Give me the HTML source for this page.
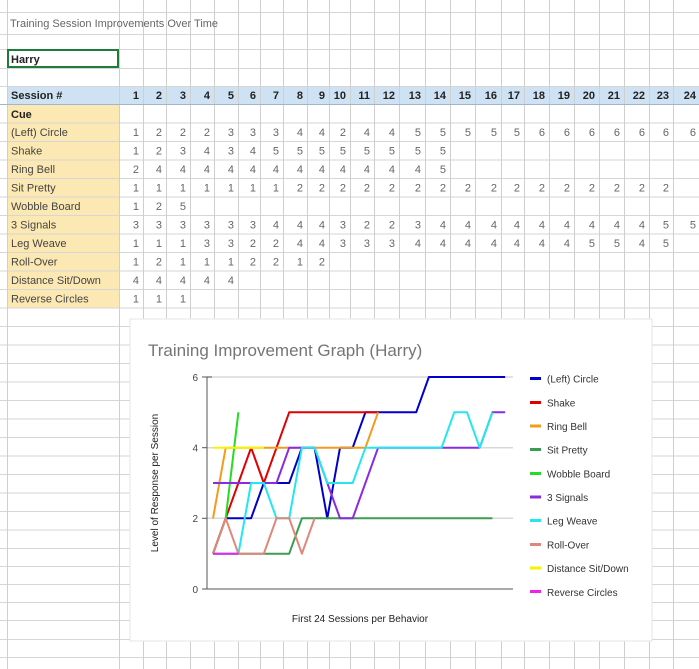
<!DOCTYPE html>
<html><head><meta charset="utf-8"><style>
html,body{margin:0;padding:0;background:#fff;width:699px;height:669px;overflow:hidden}
svg{display:block;font-family:"Liberation Sans",Arial,sans-serif}
</style></head><body>
<svg width="699" height="669" viewBox="0 0 699 669" xmlns="http://www.w3.org/2000/svg">
<!-- fills -->
<rect x="7" y="86" width="693" height="18" fill="#cfe2f3"/>
<rect x="7" y="104" width="113" height="204" fill="#fce8b2"/>
<!-- horizontal grid -->
<g stroke="#d6d6d6" stroke-width="1">
<line x1="0" x2="699" y1="12.5" y2="12.5"/><line x1="0" x2="699" y1="34.5" y2="34.5"/>
<line x1="0" x2="699" y1="49.5" y2="49.5"/><line x1="0" x2="699" y1="68.5" y2="68.5"/>
<line x1="0" x2="699" y1="86.5" y2="86.5"/><line x1="0" x2="699" y1="104.5" y2="104.5"/>
<line x1="0" x2="699" y1="123" y2="123"/><line x1="0" x2="699" y1="141.5" y2="141.5"/>
<line x1="0" x2="699" y1="160" y2="160"/><line x1="0" x2="699" y1="178.5" y2="178.5"/>
<line x1="0" x2="699" y1="197" y2="197"/><line x1="0" x2="699" y1="215.5" y2="215.5"/>
<line x1="0" x2="699" y1="234" y2="234"/><line x1="0" x2="699" y1="252.5" y2="252.5"/>
<line x1="0" x2="699" y1="271" y2="271"/><line x1="0" x2="699" y1="289.5" y2="289.5"/>
<line x1="0" x2="699" y1="308" y2="308"/><line x1="0" x2="699" y1="326.5" y2="326.5"/>
<line x1="0" x2="699" y1="345" y2="345"/><line x1="0" x2="699" y1="363.5" y2="363.5"/>
<line x1="0" x2="699" y1="382" y2="382"/><line x1="0" x2="699" y1="400.5" y2="400.5"/>
<line x1="0" x2="699" y1="419" y2="419"/><line x1="0" x2="699" y1="437.5" y2="437.5"/>
<line x1="0" x2="699" y1="456" y2="456"/><line x1="0" x2="699" y1="474.5" y2="474.5"/>
<line x1="0" x2="699" y1="493" y2="493"/><line x1="0" x2="699" y1="511.5" y2="511.5"/>
<line x1="0" x2="699" y1="530" y2="530"/><line x1="0" x2="699" y1="548.5" y2="548.5"/>
<line x1="0" x2="699" y1="566.5" y2="566.5"/><line x1="0" x2="699" y1="584.5" y2="584.5"/>
<line x1="0" x2="699" y1="602.5" y2="602.5"/><line x1="0" x2="699" y1="620.5" y2="620.5"/>
<line x1="0" x2="699" y1="639.5" y2="639.5"/><line x1="0" x2="699" y1="657.5" y2="657.5"/>
</g>
<g stroke="#cfcfcf" stroke-width="1">
<line x1="7.5" x2="7.5" y1="0" y2="669"/><line x1="119.5" x2="119.5" y1="0" y2="669"/>
<line x1="143.5" x2="143.5" y1="0" y2="669"/><line x1="166.5" x2="166.5" y1="0" y2="669"/>
<line x1="190.5" x2="190.5" y1="0" y2="669"/><line x1="214.5" x2="214.5" y1="0" y2="669"/>
<line x1="238.5" x2="238.5" y1="0" y2="669"/><line x1="260.5" x2="260.5" y1="0" y2="669"/>
<line x1="283.5" x2="283.5" y1="0" y2="669"/><line x1="307.5" x2="307.5" y1="0" y2="669"/>
<line x1="329.5" x2="329.5" y1="0" y2="669"/><line x1="350.5" x2="350.5" y1="0" y2="669"/>
<line x1="374.5" x2="374.5" y1="0" y2="669"/><line x1="399.5" x2="399.5" y1="0" y2="669"/>
<line x1="425.5" x2="425.5" y1="0" y2="669"/><line x1="450.5" x2="450.5" y1="0" y2="669"/>
<line x1="475.5" x2="475.5" y1="0" y2="669"/><line x1="501.5" x2="501.5" y1="0" y2="669"/>
<line x1="524.5" x2="524.5" y1="0" y2="669"/><line x1="549.5" x2="549.5" y1="0" y2="669"/>
<line x1="574.5" x2="574.5" y1="0" y2="669"/><line x1="599.5" x2="599.5" y1="0" y2="669"/>
<line x1="624.5" x2="624.5" y1="0" y2="669"/><line x1="649.5" x2="649.5" y1="0" y2="669"/>
<line x1="673.5" x2="673.5" y1="0" y2="669"/>
</g>
<line x1="0" x2="699" y1="104.5" y2="104.5" stroke="#9fb6cc"/>
<!-- header texts -->
<text x="10" y="27" font-size="11" fill="#666">Training Session Improvements Over Time</text>
<rect x="8" y="50" width="110" height="17" fill="#fff" stroke="#1e7b3a" stroke-width="2"/>
<text x="11" y="63" font-size="11" font-weight="bold" fill="#222">Harry</text>
<g font-size="11" font-weight="bold" fill="#222" text-anchor="end">
<text x="66" y="99" text-anchor="start" transform="translate(-55 0)">Session #</text>
<text x="139" y="99">1</text><text x="162" y="99">2</text><text x="186" y="99">3</text><text x="210" y="99">4</text>
<text x="234" y="99">5</text><text x="256" y="99">6</text><text x="279" y="99">7</text><text x="303" y="99">8</text>
<text x="325" y="99">9</text><text x="346" y="99">10</text><text x="370" y="99">11</text><text x="395" y="99">12</text>
<text x="421" y="99">13</text><text x="446" y="99">14</text><text x="471" y="99">15</text><text x="497" y="99">16</text>
<text x="520" y="99">17</text><text x="545" y="99">18</text><text x="570" y="99">19</text><text x="595" y="99">20</text>
<text x="620" y="99">21</text><text x="645" y="99">22</text><text x="669" y="99">23</text><text x="696" y="99">24</text>
<text x="11" y="118" text-anchor="start">Cue</text>
</g>
<g font-size="11" fill="#444">
<text x="11" y="136">(Left) Circle</text><text x="11" y="154.5">Shake</text><text x="11" y="173">Ring Bell</text>
<text x="11" y="191.5">Sit Pretty</text><text x="11" y="210">Wobble Board</text><text x="11" y="228.5">3 Signals</text>
<text x="11" y="247">Leg Weave</text><text x="11" y="265.5">Roll-Over</text><text x="11" y="284">Distance Sit/Down</text>
<text x="11" y="302.5">Reverse Circles</text>
</g>
<g font-size="11" fill="#666" text-anchor="end">
<text x="139 162 186 210 234 256 279 303 325 346 370 395 421 446 471 497 520 545 570 595 620 645 669 696" y="136">122233344244555556666666</text>
<text x="139 162 186 210 234 256 279 303 325 346 370 395 421 446" y="154.5">12343455555555</text>
<text x="139 162 186 210 234 256 279 303 325 346 370 395 421 446" y="173">24444444444445</text>
<text x="139 162 186 210 234 256 279 303 325 346 370 395 421 446 471 497 520 545 570 595 620 645 669" y="191.5">11111112222222222222222</text>
<text x="139 162 186" y="210">125</text>
<text x="139 162 186 210 234 256 279 303 325 346 370 395 421 446 471 497 520 545 570 595 620 645 669 696" y="228.5">333333444322344444444455</text>
<text x="139 162 186 210 234 256 279 303 325 346 370 395 421 446 471 497 520 545 570 595 620 645 669" y="247">11133224433344444445545</text>
<text x="139 162 186 210 234 256 279 303 325" y="265.5">121112212</text>
<text x="139 162 186 210 234" y="284">44444</text>
<text x="139 162 186" y="302.5">111</text>
</g>
<!-- chart -->
<rect x="130" y="319" width="522" height="322" fill="#fff" stroke="#e6e6e6"/>
<text x="148" y="356" font-size="17" fill="#757575">Training Improvement Graph (Harry)</text>
<g stroke="#d8d8d8" stroke-width="1.5">
<line x1="207" x2="513" y1="377" y2="377"/><line x1="207" x2="513" y1="447.7" y2="447.7"/><line x1="207" x2="513" y1="518.3" y2="518.3"/>
</g>
<line x1="207" x2="513" y1="589" y2="589" stroke="#555"/>
<line x1="207" x2="207" y1="377" y2="589" stroke="#555"/>
<g stroke="#555"><line x1="202" x2="212" y1="377" y2="377"/><line x1="202" x2="207" y1="447.7" y2="447.7"/><line x1="202" x2="207" y1="518.3" y2="518.3"/><line x1="202" x2="212" y1="589" y2="589"/></g>
<g font-size="10" fill="#444" text-anchor="end">
<text x="198" y="381">6</text><text x="198" y="451.5">4</text><text x="198" y="522">2</text><text x="198" y="593">0</text>
</g>
<text transform="translate(158 483) rotate(-90)" font-size="10" fill="#222" text-anchor="middle">Level of Response per Session</text>
<text x="360" y="622" font-size="10" fill="#222" text-anchor="middle">First 24 Sessions per Behavior</text>
<g fill="none" stroke-width="2" stroke-linejoin="round">
<polyline stroke="#0000cc" points="213,553.7 225.7,518.3 238.4,518.3 251.1,518.3 263.8,483 276.5,483 289.2,483 301.9,447.7 314.6,447.7 327.3,518.3 340,447.7 352.7,447.7 365.4,412.3 378.1,412.3 390.8,412.3 403.5,412.3 416.2,412.3 428.9,377 505.1,377"/>
<polyline stroke="#e00000" points="213,553.7 225.7,518.3 238.4,483 251.1,447.7 263.8,483 276.5,447.7 289.2,412.3 378.1,412.3"/>
<polyline stroke="#f59a1b" points="213,518.3 225.7,447.7 365.4,447.7 378.1,412.3"/>
<polyline stroke="#3a9d4f" points="213,553.7 289.2,553.7 301.9,518.3 492.4,518.3"/>
<polyline stroke="#22dd22" points="213,553.7 225.7,518.3 238.4,412.3"/>
<polyline stroke="#8a2be2" points="213,483 276.5,483 289.2,447.7 314.6,447.7 327.3,483 340,518.3 352.7,518.3 365.4,483 378.1,447.7 479.7,447.7 492.4,412.3 505.1,412.3"/>
<polyline stroke="#22e6f0" points="213,553.7 238.4,553.7 251.1,483 263.8,483 276.5,518.3 289.2,518.3 301.9,447.7 314.6,447.7 327.3,483 352.7,483 365.4,447.7 441.6,447.7 454.3,412.3 467,412.3 479.7,447.7 492.4,412.3"/>
<polyline stroke="#e0867a" points="213,553.7 225.7,518.3 238.4,553.7 263.8,553.7 276.5,518.3 289.2,518.3 301.9,553.7 314.6,518.3"/>
<polyline stroke="#f5f500" points="213,447.7 263.8,447.7"/>
<polyline stroke="#ee22ee" points="213,553.7 238.4,553.7"/>
</g>
<g>
<rect x="530" y="377" width="11" height="3" fill="#0000cc"/>
<rect x="530" y="401" width="11" height="3" fill="#e00000"/>
<rect x="530" y="424.5" width="11" height="3" fill="#f59a1b"/>
<rect x="530" y="448" width="11" height="3" fill="#3a9d4f"/>
<rect x="530" y="472" width="11" height="3" fill="#22dd22"/>
<rect x="530" y="495.5" width="11" height="3" fill="#8a2be2"/>
<rect x="530" y="519" width="11" height="3" fill="#22e6f0"/>
<rect x="530" y="543" width="11" height="3" fill="#e0867a"/>
<rect x="530" y="566.5" width="11" height="3" fill="#f5f500"/>
<rect x="530" y="590" width="11" height="3" fill="#ee22ee"/>
</g>
<g font-size="10" fill="#333">
<text x="547" y="382.5">(Left) Circle</text><text x="547" y="406.5">Shake</text><text x="547" y="430">Ring Bell</text>
<text x="547" y="453.5">Sit Pretty</text><text x="547" y="477.5">Wobble Board</text><text x="547" y="501">3 Signals</text>
<text x="547" y="524.5">Leg Weave</text><text x="547" y="548.5">Roll-Over</text><text x="547" y="572">Distance Sit/Down</text>
<text x="547" y="596">Reverse Circles</text>
</g>
</svg>
</body></html>
